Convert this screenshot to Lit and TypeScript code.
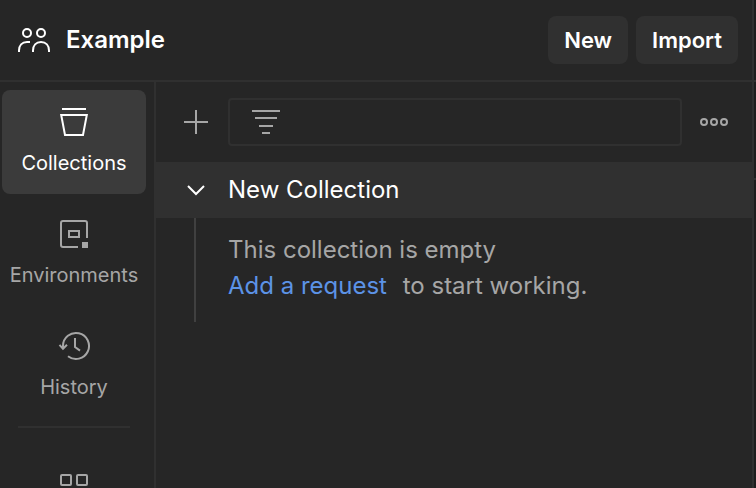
import { LitElement, html, css, svg } from "lit";
import { customElement, property, state } from "lit/decorators.js";
import { classMap } from "lit/directives/class-map.js";

const team = svg`<g fill="none" stroke="currentColor" stroke-width="2">
  <circle cx="9" cy="5" r="4"/><circle cx="23" cy="5" r="4"/>
  <path d="M1 24v-1.500C1 17.500 4 14 9 14h3M15 24v-1.500C15 17.500 18 14 23 14s8 3.500 8 8.500V24"/></g>`;

const icons: Record<string, unknown> = {
  collections: svg`<g fill="none" stroke="currentColor" stroke-width="2"><path d="M2 1h24M1.200 7h25.600L23 27H5z"/></g>`,
  environments: svg`<g fill="none" stroke="currentColor" stroke-width="2"><path d="M18 27H3a2 2 0 0 1-2-2V3a2 2 0 0 1 2-2h22a2 2 0 0 1 2 2v15"/><rect x="9" y="11" width="10" height="6"/></g><rect x="22" y="22" width="6" height="6" fill="currentColor"/>`,
  history: svg`<g fill="none" stroke="currentColor" stroke-width="2"><path d="M3 16.500V14A13 13 0 1 1 8 24.200M-.500 12.800 3 16.800l4-4M15 6v9l5 3.600"/></g>`,
  more: svg`<g fill="none" stroke="currentColor" stroke-width="2"><rect x="1" y="1" width="10" height="10" rx="1"/><rect x="17" y="1" width="10" height="10" rx="1"/><rect x="1" y="17" width="10" height="10" rx="1"/><path d="M22 16v12M16 22h12"/></g>`,
};

@customElement("nav-item")
class NavItem extends LitElement {
  @property() label = "";
  @property() icon = "";
  @property({ type: Boolean }) active = false;

  static styles = css`
    :host { display: block; }
    .item {
      width: 100%; height: 104px; padding: 18px 0 0; border: 0; border-radius: 8px;
      display: flex; flex-direction: column; align-items: center; gap: 13px;
      background: none; color: #a6a6a6; cursor: pointer;
      font: 400 20px/28px Inter, sans-serif;
    }
    .active { background: #3b3b3b; color: #fff; }
    .icon { display: block; flex: none; overflow: visible; }
  `;

  render() {
    return html`<button
      class=${classMap({ item: true, active: this.active })}
      aria-label=${this.label || "More"}
      aria-pressed=${this.active}
    >
      <svg class="icon" width="28" height="28" viewBox="0 0 28 28" aria-hidden="true">${icons[this.icon]}</svg>
      <span>${this.label}</span>
    </button>`;
  }
}

@customElement("app-root")
class AppRoot extends LitElement {
  @state() private section = "collections";
  @state() private open = true;

  static styles = css`
    :host {
      display: block; box-sizing: border-box; height: 100vh; overflow: hidden;
      background: #1d1d1d; color: #fff; font: 400 24px/36px Inter, sans-serif;
    }
    * { box-sizing: border-box; }
    button { font: inherit; color: inherit; border: 0; cursor: pointer; }
    svg { display: block; flex: none; overflow: visible; }
    .shell { display: grid; grid-template-columns: minmax(0, 1fr) 2px; height: 100%; }
    .window {
      display: grid; grid-template-rows: 82px minmax(0, 1fr); min-width: 0; min-height: 0;
      background: #262626; border-right: 2px solid #303030;
    }
    .gutter { display: grid; grid-template-rows: 82px 98px; }
    .gutter-cell { border-bottom: 2px solid #303030; }
    .header {
      display: flex; align-items: center; gap: 8px; padding: 0 14px 0 18px;
      border-bottom: 2px solid #303030;
    }
    .workspace {
      display: flex; align-items: center; gap: 16px; margin: 0 auto 0 0;
      font-size: 24px; font-weight: 600; line-height: 36px;
    }
    .action {
      height: 48px; padding: 0 16px; border-radius: 8px; background: #303030;
      font-size: 22px; font-weight: 600;
    }
    .body { display: grid; grid-template-columns: 156px minmax(0, 1fr); min-height: 0; }
    .sidebar {
      display: flex; flex-direction: column; gap: 8px; padding: 8px 8px 0 2px;
      border-right: 2px solid #303030; overflow: hidden;
    }
    .sidebar nav-item { flex: none; }
    .divider { flex: none; width: 112px; height: 2px; margin: 0 0 20px 16px; border: 0; background: #303030; }
    .toolbar { display: flex; align-items: center; gap: 18px; height: 80px; padding: 0 24px 0 26px; }
    .tool { width: 28px; padding: 0; display: flex; justify-content: center; background: none; color: #a6a6a6; }
    .search {
      flex: 1; min-width: 0; height: 48px; display: flex; align-items: center; gap: 12px;
      padding: 0 12px 0 22px; border: 2px solid #303030; border-radius: 4px; color: #a6a6a6;
    }
    .field {
      flex: 1; min-width: 0; height: 36px; padding: 0; border: 0; outline: 0;
      background: none; color: #fff; font: inherit;
    }
    .row {
      width: 100%; height: 56px; display: flex; align-items: center; gap: 22px;
      padding: 0 30px; background: #303030; text-align: left;
    }
    .contents { margin-left: 38px; height: 104px; padding: 14px 0 0 32px; border-left: 2px solid #404040; color: #a6a6a6; }
    .contents p { margin: 0; }
    .link { margin-right: 9px; color: #5c93e6; text-decoration: none; }
  `;

  private select(name: string) {
    this.section = name;
  }

  render() {
    const nav = [
      ["collections", "Collections"],
      ["environments", "Environments"],
      ["history", "History"],
    ];
    return html`
      <div class="shell">
        <div class="window">
          <header class="header">
            <h1 class="workspace">
              <svg width="32" height="24" viewBox="0 0 32 24" aria-hidden="true">${team}</svg>
              <span>Example</span>
            </h1>
            <button class="action">New</button>
            <button class="action">Import</button>
          </header>
          <div class="body">
            <nav class="sidebar">
              ${nav.map(
                ([icon, label]) => html`<nav-item
                  icon=${icon}
                  label=${label}
                  ?active=${this.section === icon}
                  @click=${() => this.select(icon)}
                ></nav-item>`
              )}
              <hr class="divider" />
              <nav-item icon="more"></nav-item>
            </nav>
            <main>
              <div class="toolbar">
                <button class="tool" aria-label="Create">
                  <svg width="24" height="24" viewBox="0 0 24 24"><path d="M12 0v24M0 12h24" stroke="currentColor" stroke-width="2"/></svg>
                </button>
                <label class="search">
                  <svg width="28" height="24" viewBox="0 0 28 24" aria-hidden="true"><path d="M0 1h28M3 8h22M7 16h14M10 23h8" stroke="currentColor" stroke-width="2"/></svg>
                  <input class="field" type="text" aria-label="Filter collections" />
                </label>
                <button class="tool" aria-label="More actions">
                  <svg width="28" height="8" viewBox="0 0 28 8" fill="none" stroke="currentColor" stroke-width="2"><circle cx="4" cy="4" r="3"/><circle cx="14" cy="4" r="3"/><circle cx="24" cy="4" r="3"/></svg>
                </button>
              </div>
              <button class="row" aria-expanded=${this.open} @click=${() => (this.open = !this.open)}>
                <svg width="20" height="10" viewBox="0 0 20 10" aria-hidden="true"><path d="M2 1l8 8 8-8" fill="none" stroke="currentColor" stroke-width="2"/></svg>
                <span>New Collection</span>
              </button>
              ${this.open
                ? html`<div class="contents">
                    <p>This collection is empty</p>
                    <p><a class="link" href="#">Add a request</a> to start working.</p>
                  </div>`
                : null}
            </main>
          </div>
        </div>
        <div class="gutter"><div class="gutter-cell"></div><div class="gutter-cell"></div></div>
      </div>
    `;
  }
}
